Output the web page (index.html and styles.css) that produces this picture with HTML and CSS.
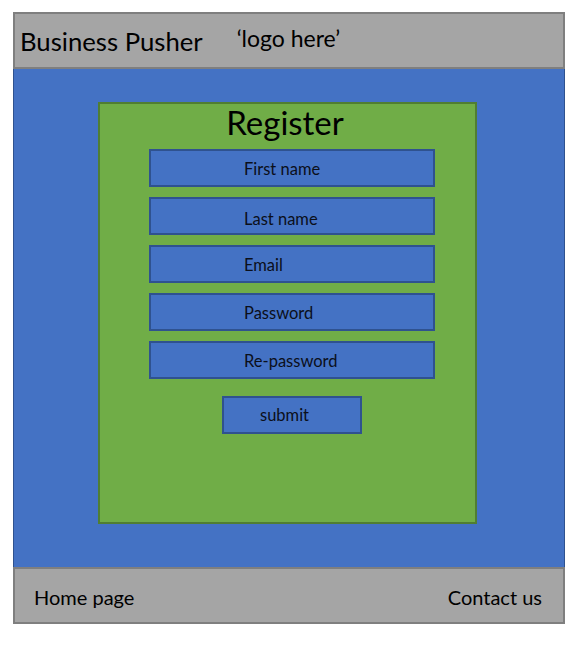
FILE: index.html
```html
<!DOCTYPE html>
<html lang="en">
<head>
<meta charset="utf-8">
<title>Business Pusher - Register</title>
<link rel="stylesheet" href="styles.css">
</head>
<body>
<div class="frame">
  <header class="topbar">
    <span class="brand">Business Pusher</span>
    <span class="logo">‘logo here’</span>
  </header>
  <main class="main">
    <section class="card">
      <h1 class="title">Register</h1>
      <div class="field">First name</div>
      <div class="field field-low">Last name</div>
      <div class="field">Email</div>
      <div class="field">Password</div>
      <div class="field">Re-password</div>
      <div class="submit">submit</div>
    </section>
  </main>
  <footer class="bottombar">
    <span class="link">Home page</span>
    <span class="link">Contact us</span>
  </footer>
</div>
</body>
</html>
```
FILE: styles.css
```css
* { box-sizing: border-box; }
html, body { margin: 0; padding: 0; background: #ffffff; }
body { font-family: Lato, "Open Sans", sans-serif; color: #000; }

.frame {
  width: 552px;
  margin: 12px 0 0 13px;
  display: flex;
  flex-direction: column;
}

.topbar {
  height: 57px;
  background: #a5a5a5;
  border: 2px solid #7f7f7f;
  display: flex;
  align-items: center;
  padding-left: 5px;
}
.brand { font-size: 25.7px; }
.logo { font-size: 23px; margin-left: 34px; margin-top: -5px; }

.main {
  height: 498px;
  background: #4472c4;
  border-left: 1px solid #2f528f;
  border-right: 1px solid #2f528f;
  padding: 33px 0 0 84px;
}

.card {
  width: 379px;
  height: 422px;
  background: #70ad47;
  border: 2px solid #507e32;
  padding-left: 49px;
  display: flex;
  flex-direction: column;
  align-items: flex-start;
}

.title {
  margin: 0 0 0 -49px;
  width: 375px;
  height: 45px;
  font-weight: normal;
  font-size: 33px;
  line-height: 36px;
  text-align: center;
  padding: 0 5px 0 0;
}

.field {
  width: 286px;
  height: 38px;
  background: #4472c4;
  border: 2px solid #2f528f;
  margin-bottom: 10px;
  padding-left: 93px;
  padding-top: 1px;
  display: flex;
  align-items: center;
  font-size: 16.5px;
  color: #0b0f1a;
}
.field-low { padding-top: 6px; }

.submit {
  width: 140px;
  height: 38px;
  margin: 7px 0 0 73px;
  background: #4472c4;
  border: 2px solid #2f528f;
  padding-left: 36px;
  display: flex;
  align-items: center;
  font-size: 16.5px;
  color: #0b0f1a;
}

.bottombar {
  height: 57px;
  background: #a5a5a5;
  border: 2px solid #7f7f7f;
  display: flex;
  align-items: center;
  justify-content: space-between;
  padding: 0 21px 0 19px;
}
.link { font-size: 20px; margin-top: 2px; }
```
